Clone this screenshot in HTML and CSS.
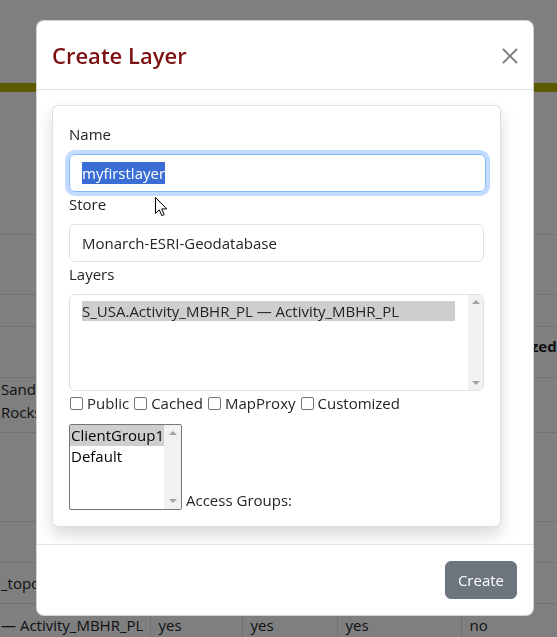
FILE: index.html
```html
<!DOCTYPE html>
<html lang="en">
<head>
<meta charset="utf-8">
<title>Create Layer</title>
<link rel="stylesheet" href="styles.css">
</head>
<body>
<div class="page">
  <div class="navbar"></div>
  <div class="olive"></div>
  <div class="spacer"></div>
  <table class="grid">
    <tr class="r1"><td class="c1"></td><td class="c2"></td><td class="c3"></td><td class="c4"></td><td class="c5"></td></tr>
    <tr class="r2"><td></td><td></td><td></td><td></td><td></td></tr>
    <tr class="r3"><td></td><td></td><td></td><td></td><td class="th">Customized</td></tr>
    <tr class="r4"><td class="top">Sand_Dunes<br>Rocks_Outcrops</td><td></td><td></td><td></td><td></td></tr>
    <tr class="r5"><td></td><td></td><td></td><td></td><td></td></tr>
    <tr class="r6"><td></td><td></td><td></td><td></td><td></td></tr>
    <tr class="r7"><td>_topo_layer</td><td></td><td></td><td></td><td></td></tr>
    <tr class="r8"><td>— Activity_MBHR_PL</td><td>yes</td><td>yes</td><td>yes</td><td>no</td></tr>
  </table>
</div>

<div class="backdrop"></div>

<div class="modal">
  <div class="modal-header">
    <h5 class="modal-title">Create Layer</h5>
    <button class="btn-close" type="button" aria-label="Close">
      <svg viewBox="0 0 16 16" width="16" height="16"><path d="M1 1L15 15M15 1L1 15" stroke="currentColor" stroke-width="1.8" fill="none"/></svg>
    </button>
  </div>
  <div class="modal-body">
    <div class="card">
      <div class="label">Name</div>
      <div class="field focused"><span class="sel">myfirstlayer</span></div>
      <div class="label">Store</div>
      <div class="field">Monarch-ESRI-Geodatabase</div>
      <div class="label">Layers</div>
      <div class="listbox">
        <div class="lb-options">
          <div class="lb-opt selected">S_USA.Activity_MBHR_PL — Activity_MBHR_PL</div>
        </div>
        <div class="sbar"><span class="arr up"></span><span class="arr down"></span></div>
      </div>
      <div class="checks">
        <span class="chk"><span class="box"></span><span>Public</span></span>
        <span class="chk"><span class="box"></span><span>Cached</span></span>
        <span class="chk"><span class="box"></span><span>MapProxy</span></span>
        <span class="chk"><span class="box"></span><span>Customized</span></span>
      </div>
      <div class="access">
        <div class="listbox2">
          <div class="lb2-options">
            <div class="lb2-opt selected">ClientGroup1</div>
            <div class="lb2-opt">Default</div>
          </div>
          <div class="sbar2"><span class="arr up"></span><span class="arr down"></span></div>
        </div>
        <span class="access-label">Access Groups:</span>
      </div>
    </div>
  </div>
  <div class="modal-footer">
    <button class="btn" type="button">Create</button>
  </div>
</div>

<svg class="cursor" width="13" height="20" viewBox="0 0 13 20"><path d="M0.5 0.5L0.5 16.5L4.3 12.8L6.8 18.6L9.2 17.6L6.7 11.9L11.8 11.9Z" fill="#fff" stroke="#000" stroke-width="1" stroke-linejoin="round"/></svg>
</body>
</html>
```

FILE: styles.css
```css
* { box-sizing: border-box; }
html, body { margin: 0; padding: 0; }
body {
  font-family: "Open Sans", "Noto Sans", "Liberation Sans", sans-serif;
  font-size: 15px;
  color: #212529;
  background: #fff;
  overflow: hidden;
  width: 557px;
  height: 637px;
}

.page { margin-left: -7px; overflow: hidden; height: 637px; }
.navbar { height: 83px; background: #fff; }
.olive { height: 9px; background: #b8b500; }
.spacer { height: 142px; }

.grid {
  border-collapse: collapse;
  table-layout: fixed;
  width: 668px;
  white-space: nowrap;
  line-height: 23px;
}
.grid td {
  border-top: 1px solid #dee2e6;
  padding: 0 8px;
  vertical-align: middle;
  overflow: hidden;
}
.grid td.top { vertical-align: top; }
.grid td.th { font-weight: 700; vertical-align: top; padding-top: 8px; }
.c1 { width: 157px; }
.c2 { width: 92px; }
.c3 { width: 95px; }
.c4 { width: 124px; }
.c5 { width: 200px; }
.grid tr.r8 td { border-left: 1px solid #dee2e6; }
.grid tr.r8 td:first-child { border-left: 0; }
.r1 { height: 60px; }
.r2 { height: 32px; }
.r3 { height: 51px; }
.r4 { height: 55px; }
.r5 { height: 89px; }
.r6 { height: 41px; }
.r7 { height: 41px; }
.r8 { height: 44px; }

.backdrop {
  position: fixed;
  inset: 0;
  background: rgba(0, 0, 0, 0.5);
}

.modal {
  position: fixed;
  left: 36px;
  top: 20px;
  width: 498px;
  background: #fff;
  border: 1px solid rgba(0, 0, 0, 0.175);
  border-radius: 8px;
  display: flex;
  flex-direction: column;
}

.modal-header {
  display: flex;
  align-items: center;
  padding: 20px 16px 19px 15px;
  border-bottom: 1px solid #dee2e6;
}
.modal-title {
  margin: 0;
  flex: 1;
  font-size: 22px;
  line-height: 29px;
  font-weight: 600;
  color: #7d1111;
}
.btn-close {
  border: 0;
  background: transparent;
  padding: 0;
  margin: 0 -1px 0 0;
  width: 16px;
  height: 16px;
  color: #7a7a7a;
  display: flex;
}

.modal-body { padding: 15px 16px 17px 15px; }

.card {
  width: 449px;
  border: 1px solid rgba(0, 0, 0, 0.125);
  border-radius: 6px;
  padding: 16px;
  box-shadow: 0 8px 16px rgba(0, 0, 0, 0.15);
  background: #fff;
}

.label {
  line-height: 24px;
  margin-bottom: 8px;
}
.field {
  height: 38px;
  border: 1px solid #dee2e6;
  border-radius: 6px;
  padding: 0 12px;
  display: flex;
  align-items: center;
  line-height: 24px;
  color: #212529;
}
.field.focused {
  border-color: #86b7fe;
  box-shadow: 0 0 0 4px rgba(13, 110, 253, 0.25);
  width: 417px;
}
.sel {
  background: #3a6ed6;
  color: #fff;
  line-height: 22px;
}

.listbox {
  height: 97px;
  border: 1px solid #dee2e6;
  border-radius: 6px;
  padding: 6px 0 0 12px;
  display: flex;
}
.lb-options { flex: 1; padding-right: 13px; }
.lb-opt { line-height: 20px; white-space: nowrap; }
.lb-opt.selected { background: #cecece; }
.sbar {
  width: 15px;
  margin: -6px 0 0 0;
  height: 95px;
  background: #f1f1f1;
  border-radius: 0 5px 5px 0;
  display: flex;
  flex-direction: column;
  justify-content: space-between;
  align-items: center;
  padding: 5px 0;
}
.arr {
  width: 0;
  height: 0;
  border-left: 4px solid transparent;
  border-right: 4px solid transparent;
}
.arr.up { border-bottom: 4px solid #a3a3a3; }
.arr.down { border-top: 4px solid #a3a3a3; }

.checks {
  line-height: 24px;
  height: 24px;
  display: flex;
  gap: 4px;
  white-space: nowrap;
}
.chk { display: inline-flex; align-items: center; }
.box {
  flex: none;
  width: 13px;
  height: 13px;
  border: 1px solid #767676;
  border-radius: 2px;
  background: #fff;
  margin: 0 4px 0 1px;
}

.access {
  margin-top: 9px;
  display: flex;
  align-items: flex-end;
  gap: 4px;
}
.listbox2 {
  width: 113px;
  height: 86px;
  border: 1px solid #767676;
  border-radius: 2px;
  display: flex;
  color: #000;
}
.lb2-options { flex: 1; }
.lb2-opt { line-height: 21px; padding-left: 1px; white-space: nowrap; }
.lb2-opt.selected { background: #cecece; }
.sbar2 {
  width: 17px;
  background: #f1f1f1;
  display: flex;
  flex-direction: column;
  justify-content: space-between;
  align-items: center;
  padding: 6px 0;
}
.access-label { line-height: 20px; }

.modal-footer {
  border-top: 1px solid #dee2e6;
  padding: 12px;
  display: flex;
  justify-content: flex-end;
}
.btn {
  margin: 4px;
  font: inherit;
  background: #6c757d;
  color: #fff;
  border: 1px solid #6c757d;
  border-radius: 6px;
  height: 38px;
  padding: 0 12px;
  line-height: 24px;
}

.cursor {
  position: fixed;
  left: 155px;
  top: 197px;
}
```
